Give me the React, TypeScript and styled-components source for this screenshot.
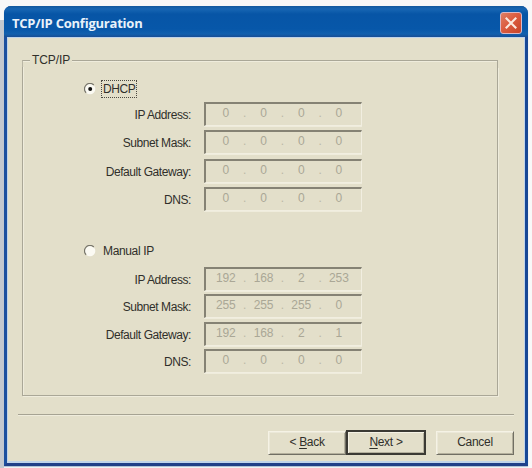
import React from "react";
import styled, { createGlobalStyle } from "styled-components";

const GlobalStyle = createGlobalStyle`
  * { box-sizing: border-box; }
  html, body { margin: 0; background: #f8f8f8; }
  body { font: 12px/14px "Liberation Sans", Arial, sans-serif; color: #302f2a; overflow: hidden; }
`;

const Desktop = styled.div`
  width: 532px;
  height: 468px;
  padding: 6px 4px 2px;
  background: linear-gradient(90deg, #c3c8cf 0, #c3c8cf 4px, #f8f8f8 4px) 0 20px no-repeat, #f8f8f8;
`;

const Window = styled.main`
  width: 524px;
  height: 460px;
  display: flex;
  flex-direction: column;
  border: solid #1b4f9f;
  border-width: 0 3px 3px;
  border-right-color: #174796;
  border-bottom-color: #203f88;
  border-radius: 7px 7px 0 0;
  background: #1557a7;
  box-shadow: 0 1px 1px #a9bdd2;
`;

const TitleBar = styled.header`
  height: 31px;
  flex: none;
  display: flex;
  align-items: center;
  justify-content: space-between;
  margin: 0 -3px;
  padding: 0 6px 0 8px;
  border-radius: 7px 7px 0 0;
  background: linear-gradient(#12589d 0, #1766b3 3px, #0755a6 8px, #0757a9 23px, #1260ae 28px, #174d94 31px);
`;

const Title = styled.h1`
  margin: 0;
  font: bold 13px/18px "Open Sans", "Noto Sans", sans-serif;
  letter-spacing: -0.22px;
  color: #e9f2fa;
  padding-top: 3px;
`;

const CloseButton = styled.button`
  width: 22px;
  height: 22px;
  margin-top: 3px;
  padding: 0;
  display: grid;
  place-items: center;
  border: 1px solid #d9b8c6;
  border-radius: 3px;
  background: linear-gradient(135deg, #df8065, #dc5c3f 45%, #c64429);
`;

const Body = styled.div`
  flex: 1;
  border: solid #bfd3ea;
  border-width: 1px 1px 2px;
  background: #e3dfca;
  padding: 15px 12px 0 10px;
`;

const Group = styled.section`
  width: 476px;
  height: 343px;
  margin-left: 4px;
`;

const LegendRow = styled.div`
  display: flex;
  align-items: center;
  height: 14px;
`;

const Edge = styled.span<{ $width?: number }>`
  ${(p) => (p.$width ? `width: ${p.$width}px;` : "flex: 1;")}
  height: 7px;
  align-self: flex-end;
  border-top: 1px solid #aaa797;
  border-left: ${(p) => (p.$width ? "1px solid #b9b6a5" : "0")};
  border-right: ${(p) => (p.$width ? "0" : "1px solid #aaa797")};
  box-shadow: inset 0 1px #efecdc;
`;

const Legend = styled.span`
  padding: 0 2px;
  letter-spacing: -0.1px;
`;

const GroupBody = styled.div`
  height: 329px;
  border: 1px solid #aaa797;
  border-top: 0;
  box-shadow: inset 1px 0 #efecdc, 1px 1px #efecdc;
  padding: 13px 0 0 61px;
`;

const RadioRow = styled.label<{ $gap: number }>`
  display: flex;
  align-items: center;
  height: 18px;
  gap: 5px;
  margin-bottom: ${(p) => p.$gap}px;
`;

const RadioLabel = styled.span<{ $focused?: boolean }>`
  height: 18px;
  padding: 1px 1px 0;
  border: 1px dotted ${(p) => (p.$focused ? "#4c4a42" : "transparent")};
  letter-spacing: ${(p) => (p.$focused ? "-0.4px" : "-0.35px")};
`;

const FieldRow = styled.div<{ $gap: number }>`
  display: flex;
  height: 24px;
  margin-bottom: ${(p) => p.$gap}px;
`;

const FieldLabel = styled.span`
  width: 107px;
  margin-right: 13px;
  padding-top: 6px;
  text-align: right;
  white-space: nowrap;
  letter-spacing: -0.42px;
`;

const AddressBox = styled.div`
  width: 158px;
  height: 24px;
  display: flex;
  padding: 2px 1px 0 2px;
  border: solid #858274;
  border-width: 2px 1px 1px 2px;
  border-right-color: #f1eee0;
  border-bottom-color: #f1eee0;
  box-shadow: 0 1px #efecdc;
  color: #aaa796;
`;

const Octet = styled.span`
  width: 35.7px;
  text-align: center;
  letter-spacing: -0.1px;
`;

const Dot = styled.span`
  width: 2px;
  display: flex;
  justify-content: center;
  color: #bbb8a7;
`;

const Separator = styled.hr`
  height: 2px;
  margin: 18px 0 14px;
  border: 0;
  border-top: 1px solid #a6a393;
  border-bottom: 1px solid #efecdc;
  width: 496px;
`;

const Actions = styled.footer`
  display: flex;
  align-items: center;
  justify-content: flex-end;
  width: 496px;
  height: 25px;
`;

const ActionButton = styled.button<{ $primary?: boolean; $spaced?: boolean }>`
  width: ${(p) => (p.$primary ? 80 : 78)}px;
  height: ${(p) => (p.$primary ? 25 : 24)}px;
  margin-left: ${(p) => (p.$spaced ? 10 : 0)}px;
  padding: 0 0 1px;
  font: inherit;
  color: #302f2a;
  letter-spacing: -0.3px;
  background: #e3dfca;
  border: ${(p) => (p.$primary ? "2px solid #3b3a34" : "1px solid #f5f2e5")};
  border-right-color: ${(p) => (p.$primary ? "#3b3a34" : "#716f64")};
  border-bottom-color: ${(p) => (p.$primary ? "#3b3a34" : "#716f64")};
  box-shadow: inset 1px 1px ${(p) => (p.$primary ? "#f5f2e5" : "#ebe8d8")}, inset -1px -1px #b4b09d;
`;

const Mnemonic = styled.span`
  text-decoration: underline;
  text-underline-offset: 2px;
`;

function Radio({ checked = false }: { checked?: boolean }) {
  return (
    <svg width="12" height="12" viewBox="0 0 12 12" aria-hidden="true">
      <circle cx="6" cy="6" r="5.3" fill="#fbfaf3" />
      <path d="M2.1 9.8A5.3 5.3 0 0 1 9.8 2" fill="none" stroke="#77756a" strokeWidth="1.2" />
      {checked && <circle cx="6.2" cy="6" r="2" fill="#11110f" />}
    </svg>
  );
}

function Address({ value }: { value: string }) {
  return (
    <AddressBox>
      {value.split(".").map((part, i) => (
        <React.Fragment key={i}>
          {i > 0 && <Dot>.</Dot>}
          <Octet>{part}</Octet>
        </React.Fragment>
      ))}
    </AddressBox>
  );
}

type Field = { label: string; value: string; gap: number };

const dhcpFields: Field[] = [
  { label: "IP Address:", value: "0.0.0.0", gap: 4 },
  { label: "Subnet Mask:", value: "0.0.0.0", gap: 5 },
  { label: "Default Gateway:", value: "0.0.0.0", gap: 4 },
  { label: "DNS:", value: "0.0.0.0", gap: 31 },
];

const manualFields: Field[] = [
  { label: "IP Address:", value: "192.168.2.253", gap: 3 },
  { label: "Subnet Mask:", value: "255.255.255.0", gap: 4 },
  { label: "Default Gateway:", value: "192.168.2.1", gap: 3 },
  { label: "DNS:", value: "0.0.0.0", gap: 0 },
];

function Fields({ items }: { items: Field[] }) {
  return (
    <>
      {items.map((f) => (
        <FieldRow key={f.label} $gap={f.gap}>
          <FieldLabel>{f.label}</FieldLabel>
          <Address value={f.value} />
        </FieldRow>
      ))}
    </>
  );
}

export default function App() {
  return (
    <>
      <GlobalStyle />
      <Desktop>
        <Window>
          <TitleBar>
            <Title>TCP/IP Configuration</Title>
            <CloseButton aria-label="Close">
              <svg width="12" height="12" viewBox="0 0 12 12">
                <path d="M1.5 1.5l9 9M10.5 1.5l-9 9" stroke="#fbe9df" strokeWidth="2.1" strokeLinecap="square" />
              </svg>
            </CloseButton>
          </TitleBar>
          <Body>
            <Group>
              <LegendRow>
                <Edge $width={8} />
                <Legend>TCP/IP</Legend>
                <Edge />
              </LegendRow>
              <GroupBody>
                <RadioRow $gap={4}>
                  <Radio checked />
                  <RadioLabel $focused>DHCP</RadioLabel>
                </RadioRow>
                <Fields items={dhcpFields} />
                <RadioRow $gap={7}>
                  <Radio />
                  <RadioLabel>Manual IP</RadioLabel>
                </RadioRow>
                <Fields items={manualFields} />
              </GroupBody>
            </Group>
            <Separator />
            <Actions>
              <ActionButton>
                &lt; <Mnemonic>B</Mnemonic>ack
              </ActionButton>
              <ActionButton $primary>
                <Mnemonic>N</Mnemonic>ext &gt;
              </ActionButton>
              <ActionButton $spaced>Cancel</ActionButton>
            </Actions>
          </Body>
        </Window>
      </Desktop>
    </>
  );
}
